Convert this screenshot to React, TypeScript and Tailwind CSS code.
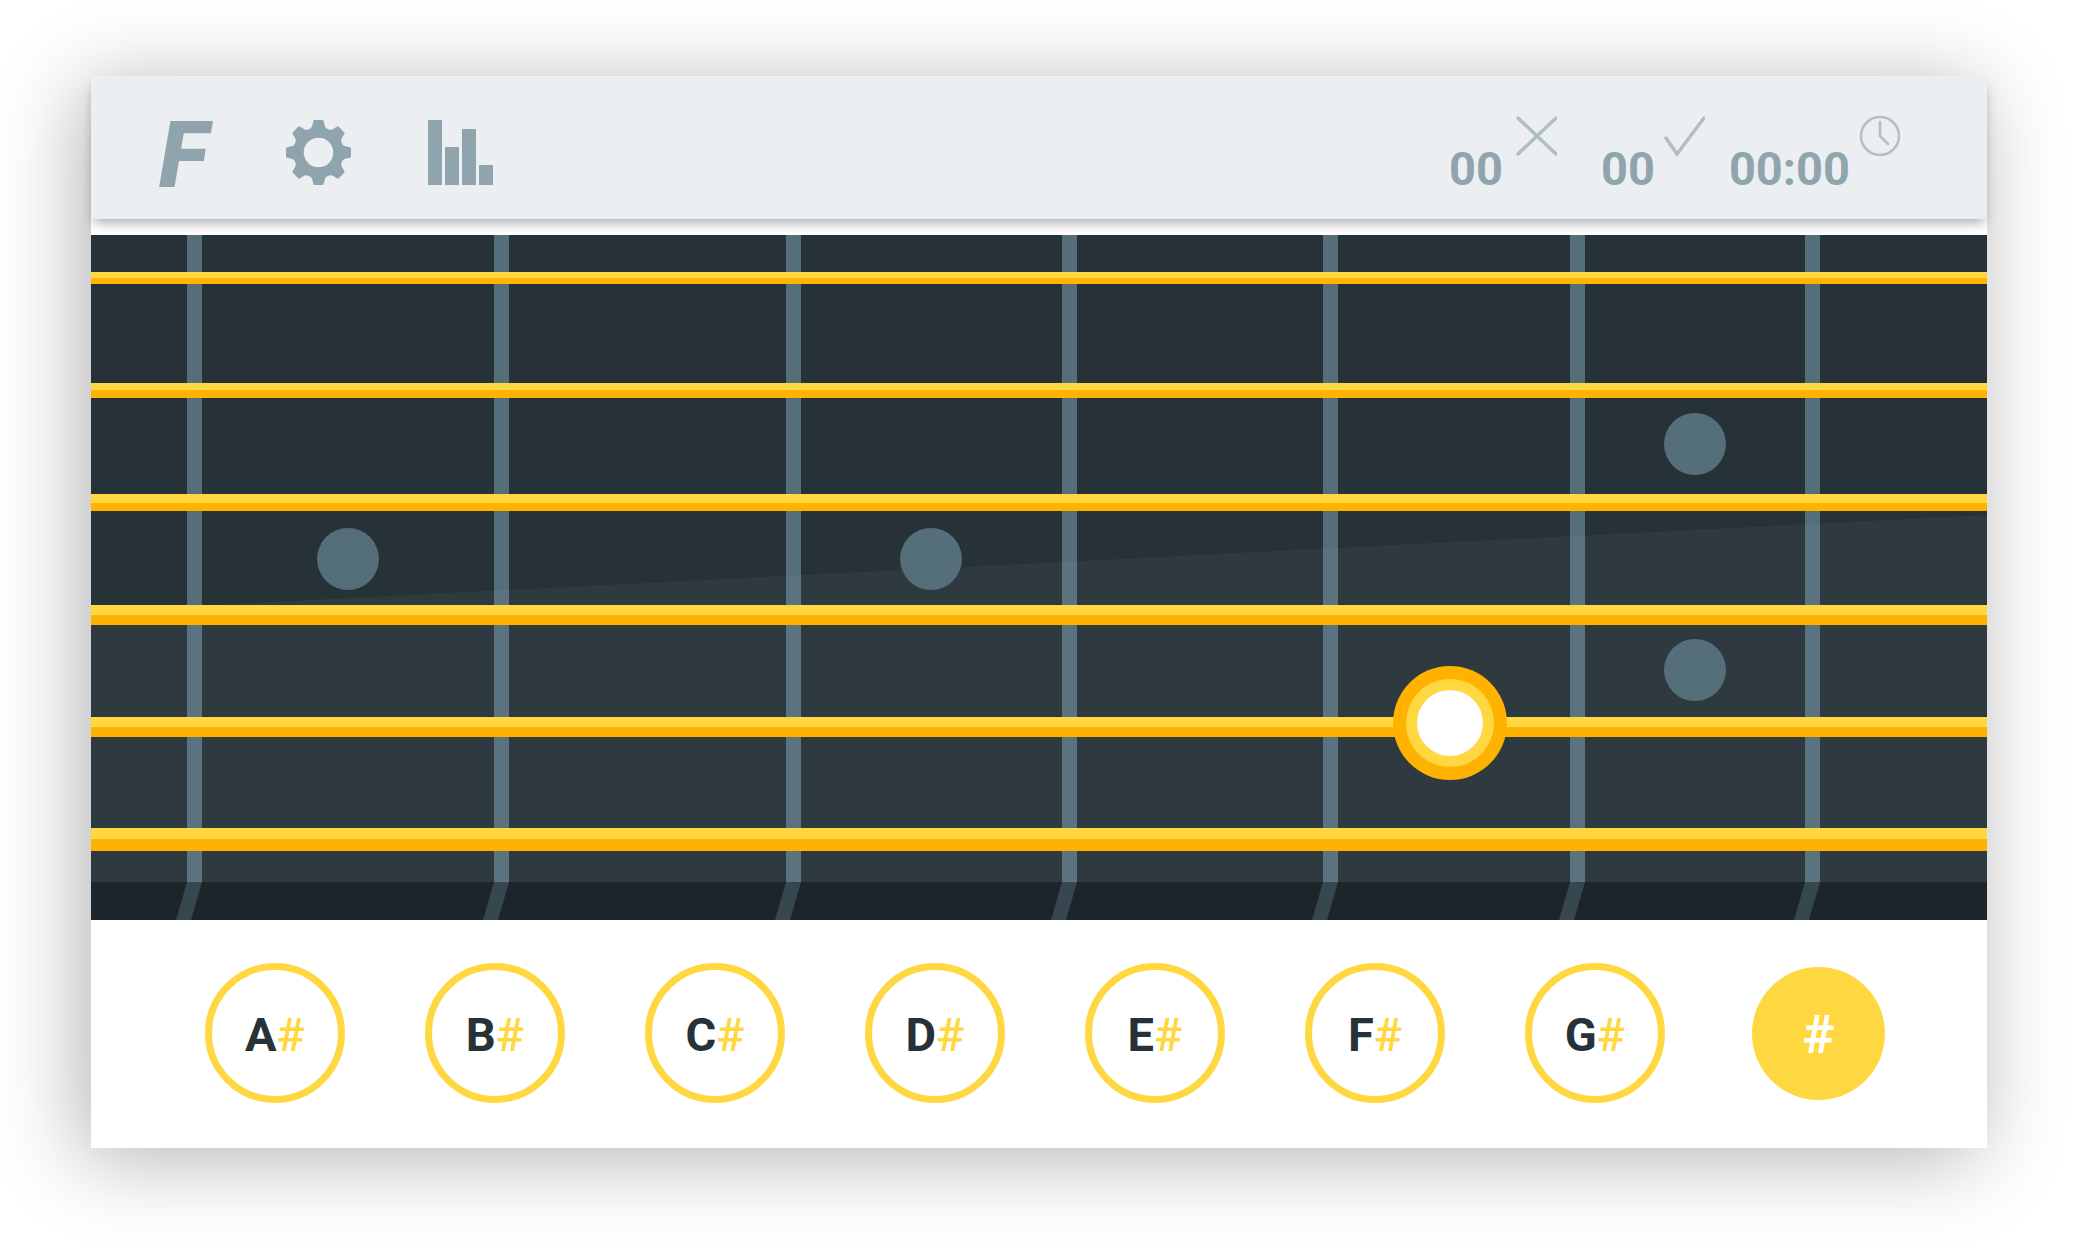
import React, { useState } from 'react';

const NOTES = ['A', 'B', 'C', 'D', 'E', 'F', 'G'];

// board units: 1896 x 685
const FRETS = [96, 403, 695, 971, 1232, 1479, 1714];
const STRINGS = [
  { y: 37, light: 6, height: 12 },
  { y: 148, light: 7, height: 15 },
  { y: 259, light: 9, height: 17 },
  { y: 370, light: 10, height: 20 },
  { y: 482, light: 10, height: 20 },
  { y: 593, light: 11, height: 23 },
];
const INLAYS = [
  { x: 257, y: 324 },
  { x: 840, y: 324 },
  { x: 1604, y: 209 },
  { x: 1604, y: 435 },
];

const GearIcon = () => (
  <svg viewBox="-33 -33 66 66" className="block size-[65px]" fill="currentColor" aria-hidden="true">
    <path
      fillRule="evenodd"
      d="M0 -25 a25 25 0 1 0 0 50 a25 25 0 1 0 0 -50 Z M0 -15 a15 15 0 1 1 0 30 a15 15 0 1 1 0 -30 Z"
    />
    {[0, 45, 90, 135, 180, 225, 270, 315].map((angle) => (
      <path
        key={angle}
        transform={`rotate(${angle})`}
        d="M-4.2 -33 H4.2 Q5 -33 5.3 -31.5 L6.6 -26.5 Q7.5 -24.3 10 -23.5 V-20 H-10 V-23.5 Q-7.5 -24.3 -6.6 -26.5 L-5.3 -31.5 Q-5 -33 -4.2 -33 Z"
      />
    ))}
  </svg>
);

const ChartIcon = () => (
  <svg viewBox="0 0 65 65" className="block size-[65px]" fill="currentColor" aria-hidden="true">
    <rect x="0" y="0" width="14" height="65" />
    <rect x="17" y="27" width="14" height="38" />
    <rect x="34" y="9" width="14" height="56" />
    <rect x="51" y="45" width="14" height="20" />
  </svg>
);

interface StatProps {
  label: string;
  value: string;
  className: string;
  children: React.ReactNode;
}

const Stat = ({ label, value, className, children }: StatProps) => (
  <div className={`flex items-start ${className}`} aria-label={label}>
    <span className="pt-7 text-[47px]/[50px] font-bold text-[#90a4ae]">{value}</span>
    <svg
      viewBox="0 0 42 42"
      className="size-[42px] text-[#b0bec5]"
      fill="none"
      stroke="currentColor"
      strokeWidth="3.5"
      strokeLinecap="round"
      aria-hidden="true"
    >
      {children}
    </svg>
  </div>
);

const Toolbar = () => (
  <header className="flex items-start justify-between bg-[#eceff1] pt-10 pr-[87px] pb-[25px] pl-[68px] shadow-[0_7px_11px_-3px_rgba(0,0,0,0.32)]">
    <nav className="flex items-start gap-[77px] pt-1 text-[#90a4ae]">
      <a href="#home" className="w-[50px] text-[92px]/[71px] font-black italic">F</a>
      <button type="button" aria-label="Settings">
        <GearIcon />
      </button>
      <button type="button" aria-label="Statistics">
        <ChartIcon />
      </button>
    </nav>
    <div className="flex items-start">
      <Stat label="Wrong answers" value="00" className="mr-11 gap-3">
        <path d="M3 2 L41 38 M41 2 L3 38" />
      </Stat>
      <Stat label="Correct answers" value="00" className="mr-6 gap-2">
        <path d="M3 22 L14 38 L41 2" />
      </Stat>
      <Stat label="Time" value="00:00" className="gap-2">
        <circle cx="22" cy="20" r="19" strokeWidth="2.5" />
        <path d="M22 6 V20 L30 28" strokeWidth="2.5" />
      </Stat>
    </div>
  </header>
);

const Fretboard = () => (
  <svg viewBox="0 0 1896 685" className="mt-4 block w-full" role="img" aria-label="Guitar fretboard">
    <rect width="1896" height="685" fill="#263238" />
    {FRETS.map((x) => (
      <rect key={x} x={x} width="15" height="647" fill="#546e7a" />
    ))}
    <path d="M0 376 L1896 280 V647 H0 Z" fill="#ffffff" fillOpacity="0.04" />

    {/* Neck edge */}
    <rect y="647" width="1896" height="38" fill="#1c2529" />
    {FRETS.map((x) => (
      <path key={x} d={`M${x} 647 h15 l-11 38 h-15 Z`} fill="#37474f" />
    ))}

    {INLAYS.map(({ x, y }) => (
      <circle key={`${x}-${y}`} cx={x} cy={y} r="31" fill="#546e7a" />
    ))}

    {STRINGS.map(({ y, light, height }) => (
      <g key={y}>
        <rect y={y} width="1896" height={height} fill="#ffb300" />
        <rect y={y} width="1896" height={light} fill="#ffd740" />
      </g>
    ))}

    {/* Note to guess */}
    <circle cx="1359" cy="488" r="57" fill="#ffb300" />
    <circle cx="1359" cy="488" r="44" fill="#ffd740" />
    <circle cx="1359" cy="488" r="33" fill="#ffffff" />
  </svg>
);

export default function App() {
  const [sharp, setSharp] = useState(true);

  return (
    <div className="bg-white pt-[76px] pr-[87px] pb-[102px] pl-[91px] font-['Roboto',sans-serif]">
      <main className="bg-white shadow-[-10px_10px_80px_rgba(0,0,0,0.3)]">
        <Toolbar />
        <Fretboard />
        <div className="flex items-center pt-[43px] pr-[102px] pb-[45px] pl-[114px]">
          <div className="flex gap-20">
            {NOTES.map((note) => (
              <button
                key={note}
                type="button"
                className="size-[140px] rounded-full border-[7px] border-[#ffd740] pt-1 text-[47px] font-bold text-[#263238]"
              >
                {note}
                {sharp && <span className="font-medium text-[#ffd740]">#</span>}
              </button>
            ))}
          </div>
          <button
            type="button"
            aria-pressed={sharp}
            onClick={() => setSharp(!sharp)}
            className="ml-auto size-[133px] rounded-full bg-[#ffd740] pt-0.5 text-[54px] font-bold text-white"
          >
            #
          </button>
        </div>
      </main>
    </div>
  );
}
